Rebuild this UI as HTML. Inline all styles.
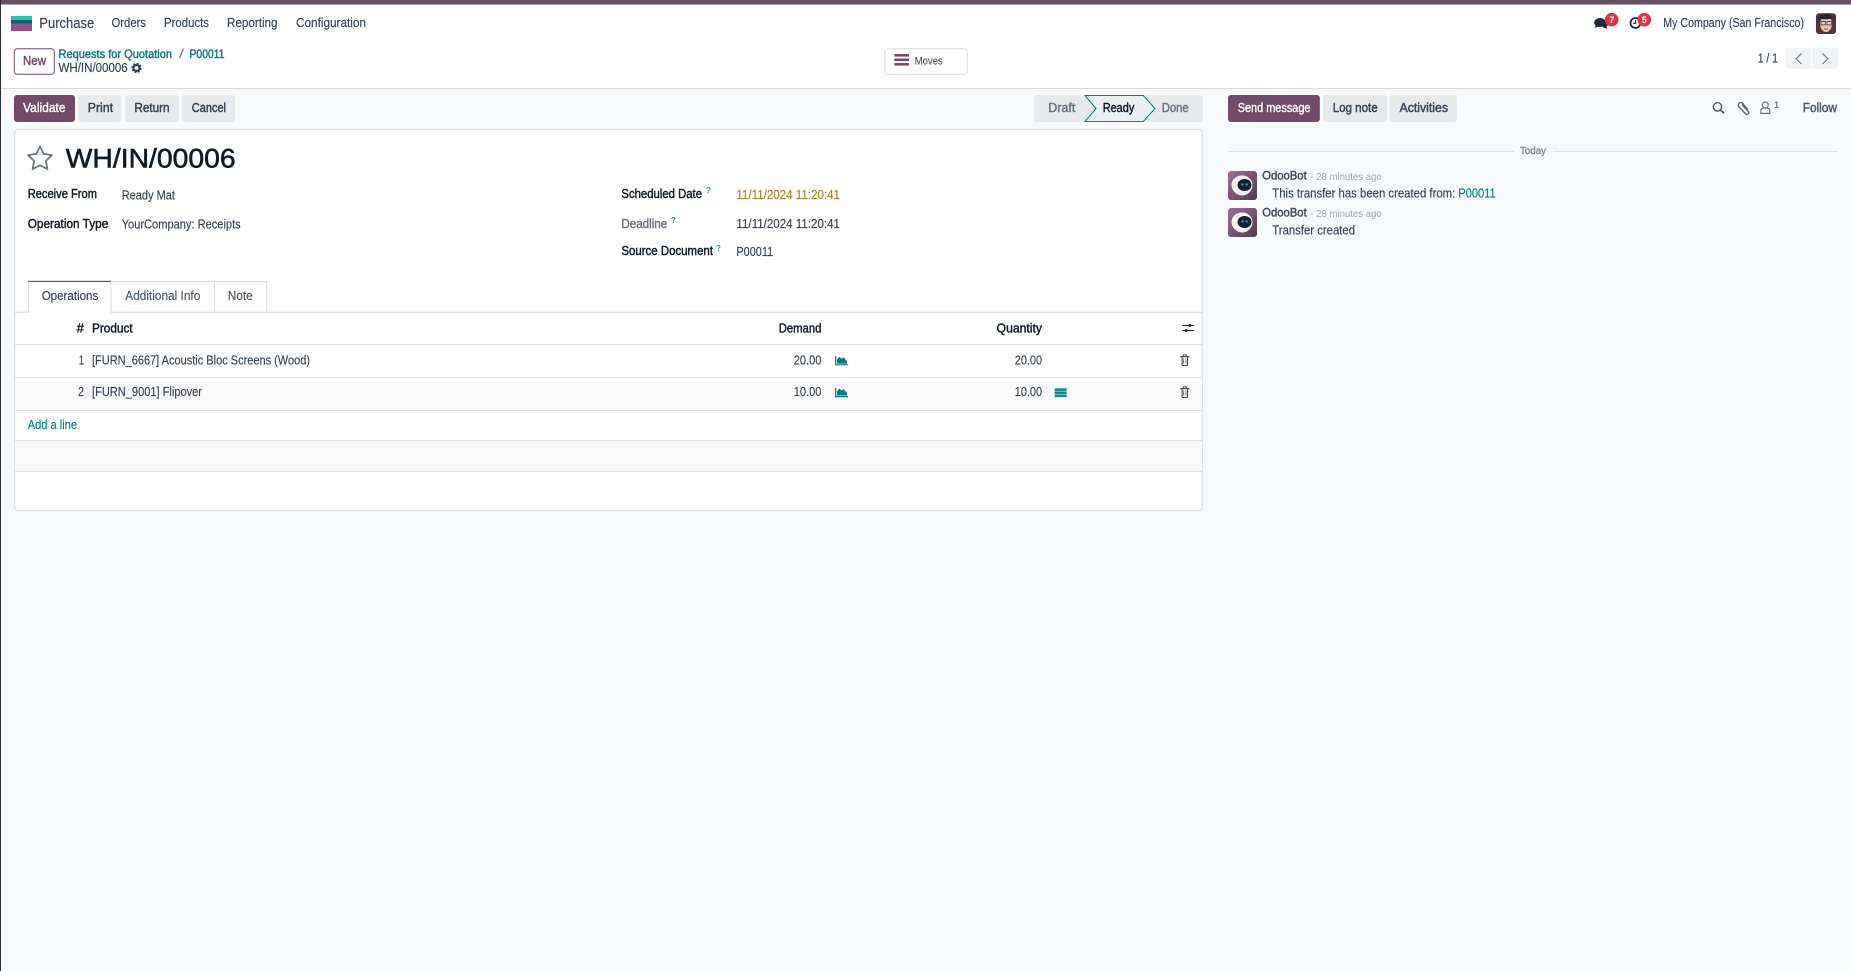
<!DOCTYPE html>
<html lang="en"><head><meta charset="utf-8"><title>WH/IN/00006</title>
<style>
html,body{margin:0;padding:0;background:#f9fafb;overflow:hidden}
svg{display:block}
text{font-family:"Liberation Sans",sans-serif;font-size:12.5px;fill:#374151}
.d{color:#374151;fill:#374151;stroke:#374151;stroke-width:.14}
.k{color:#111827;fill:#111827}
.l{color:#017e84;fill:#017e84;stroke:#017e84;stroke-width:.14}
.w{color:#fff;fill:#fff}
.p{color:#714b67;fill:#714b67}
.g{color:#6b7280;fill:#6b7280}
.q{font-size:8px;fill:#2a9aa8;font-weight:700}
.m{stroke-width:.42;stroke:currentColor}
</style></head><body>
<svg xmlns="http://www.w3.org/2000/svg" width="1851" height="971" viewBox="0 0 1851 971">
<defs>
<linearGradient id="bot" x1="0" y1="0" x2="1" y2="1"><stop offset="0" stop-color="#a06f98"/><stop offset="1" stop-color="#4f3a4c"/></linearGradient>
<g id="ob">
<rect width="29" height="29" rx="3" fill="url(#bot)"/>
<path d="M14 4.500c6 0 10.500 4 10.500 9.500S20 24.500 14 24.500c-2 0-3.500-.5-5-1.500C6 21 3.500 18 3.500 14 3.500 8.500 8 4.500 14 4.500z" fill="#f4f4f4"/>
<ellipse cx="16.500" cy="14" rx="7" ry="6" fill="#17202b"/>
<circle cx="14.500" cy="13.500" r="1.200" fill="#17a2a6"/><circle cx="18.700" cy="13.500" r="1.200" fill="#17a2a6"/>
</g>
<g id="chart" fill="#017e84"><path d="M0 0h1.200v8h11.800v1.200H0z"/><path d="M2 7.500V3.300L4.500.5 6.500 2.500 8.500 1l3.500 4v2.500z"/></g>
<g id="trash" fill="none" stroke="#374151"><path d="M1.800 3v7.600q0 .9.900.9h3.600q.9 0 .9-.9V3" stroke-width="1"/><path d="M0 2.600h9" stroke-width="1.100"/><path d="M3 2.300V.8h3v1.500" stroke-width=".9"/><path d="M3.400 4.500v5M5.600 4.500v5" stroke-width=".7"/></g>
</defs>

<rect width="1851" height="971" fill="#f9fafb"/>
<rect width="1851" height="88" fill="#fff"/>
<rect y="88" width="1851" height="1" fill="#d8dadd"/>
<rect width="1851" height="4.500" fill="#64505f"/>
<rect width="1" height="971" fill="#2b2f3a"/>

<!-- logo -->
<rect x="11" y="16" width="21" height="4.200" fill="#1fc7b3"/>
<rect x="11" y="20" width="21" height="3.700" fill="#0b5f6e"/>
<rect x="11" y="23.500" width="21" height="7.500" fill="#9a5088"/>
<text x="39.300" y="28" textLength="55" lengthAdjust="spacingAndGlyphs" style="font-size:14.500px" class="d">Purchase</text>
<text x="111.500" y="27" textLength="34.500" lengthAdjust="spacingAndGlyphs" class="d">Orders</text>
<text x="164" y="27" textLength="45" lengthAdjust="spacingAndGlyphs" class="d">Products</text>
<text x="227" y="27" textLength="50.500" lengthAdjust="spacingAndGlyphs" class="d">Reporting</text>
<text x="296" y="27" textLength="70" lengthAdjust="spacingAndGlyphs" class="d">Configuration</text>

<!-- systray -->
<g fill="#1f2937">
<ellipse cx="1600" cy="22.500" rx="5.800" ry="4.500"/>
<path d="M1596 25l-1.500 3 4-1.500z"/>
<path d="M1603 27.500c2.500 0 4.500-1 5-3l-1.500-1.500-4 3z"/>
<path d="M1606 26l1.500 3-4-1.500z"/>
</g>
<circle cx="1611.700" cy="19.700" r="6.800" fill="#dc3545"/>
<text x="1611.700" y="22.800" text-anchor="middle" class="w" style="font-size:9px;font-weight:700">7</text>
<circle cx="1635.500" cy="23" r="5" fill="none" stroke="#1f2937" stroke-width="1.800"/>
<path d="M1635.500 20v3.300h-2.500" fill="none" stroke="#1f2937" stroke-width="1.100"/>
<circle cx="1644.300" cy="19.700" r="6.800" fill="#dc3545"/>
<text x="1644.300" y="22.800" text-anchor="middle" class="w" style="font-size:9px;font-weight:700">5</text>
<text x="1663.300" y="27" textLength="140.700" lengthAdjust="spacingAndGlyphs" class="d">My Company (San Francisco)</text>

<!-- avatar -->
<rect x="1816" y="13.300" width="20" height="20.700" rx="3" fill="#55303f"/>
<path d="M1820 24c0-5 2-7 6-7s6 2 6 7c0 4-2.500 8-6 8s-6-4-6-8z" fill="#eec3a8"/>
<path d="M1819 22c-1-5 2-7 4-7.500 3-1 7-.5 9 1.500 1 1 1 3 .5 5l-1.500-2.500c-2 1-7 1-9.500.5z" fill="#2b2430"/>
<rect x="1821" y="21.500" width="4.300" height="3.400" fill="#d8d8d8" stroke="#333" stroke-width=".8"/>
<rect x="1827" y="21.500" width="4.300" height="3.400" fill="#d8d8d8" stroke="#333" stroke-width=".8"/>
<path d="M1824 29h4" stroke="#9a4a4a" stroke-width="1"/>

<!-- control panel -->
<rect x="14.300" y="48.800" width="40" height="25.500" rx="3" fill="#fff" stroke="#714b67"/>
<text x="23" y="65" textLength="23" lengthAdjust="spacingAndGlyphs" class="p m">New</text>
<text x="58.500" y="58" textLength="113.500" lengthAdjust="spacingAndGlyphs" class="l m" style="font-size:12px">Requests for Quotation</text>
<text x="179" y="58" textLength="5" lengthAdjust="spacingAndGlyphs" class="g">/</text>
<text x="189.500" y="58" textLength="35" lengthAdjust="spacingAndGlyphs" class="l m" style="font-size:12px">P00011</text>
<text x="58.500" y="72" textLength="69.200" lengthAdjust="spacingAndGlyphs" class="d">WH/IN/00006</text>
<circle cx="136.500" cy="68" r="3" fill="none" stroke="#374151" stroke-width="2.200"/>
<circle cx="136.500" cy="68" r="4.400" fill="none" stroke="#374151" stroke-width="1.500" stroke-dasharray="2 1.450"/>

<rect x="884.800" y="48.800" width="82.400" height="25.500" rx="3" fill="#fff" stroke="#d8dadd"/>
<rect x="894.300" y="54" width="14.700" height="2.600" fill="#714b67"/>
<rect x="894.300" y="58.500" width="14.700" height="2.600" fill="#714b67"/>
<rect x="894.300" y="63" width="14.700" height="2.600" fill="#714b67"/>
<text x="914.700" y="64.300" textLength="28" lengthAdjust="spacingAndGlyphs" class="d" style="font-size:11px;fill:#4b5563;stroke:#4b5563">Moves</text>

<text x="1757.700" y="62.300" textLength="20.300" lengthAdjust="spacingAndGlyphs" class="d">1 / 1</text>
<path d="M1785.300 50.700a3 3 0 0 1 3-3h22.700v21h-22.700a3 3 0 0 1-3-3z" fill="#f3f4f6"/>
<path d="M1812 47.700h23a3 3 0 0 1 3 3v15a3 3 0 0 1-3 3h-23z" fill="#f3f4f6"/>
<path d="M1801.500 53.300l-5.300 5.300 5.300 5.400" fill="none" stroke="#6b7280" stroke-width="1.100"/>
<path d="M1822.500 53.300l5.300 5.300-5.300 5.400" fill="none" stroke="#6b7280" stroke-width="1.100"/>

<!-- action buttons -->
<rect x="14" y="95" width="61" height="27" rx="3" fill="#714b67"/>
<text x="23" y="112" textLength="42.600" lengthAdjust="spacingAndGlyphs" class="w m">Validate</text>
<rect x="78" y="95" width="43.400" height="27" rx="3" fill="#e7e9ed"/>
<text x="87.800" y="112" textLength="25.200" lengthAdjust="spacingAndGlyphs" class="d m">Print</text>
<rect x="125" y="95" width="54" height="27" rx="3" fill="#e7e9ed"/>
<text x="134.400" y="112" textLength="35.200" lengthAdjust="spacingAndGlyphs" class="d m">Return</text>
<rect x="182" y="95" width="53" height="27" rx="3" fill="#e7e9ed"/>
<text x="191.800" y="112" textLength="34.200" lengthAdjust="spacingAndGlyphs" class="d m">Cancel</text>

<!-- statusbar -->
<rect x="1034" y="95" width="168.700" height="27" rx="3" fill="#e7e9ed"/>
<path d="M1085 95.500h58.300l11.700 13-11.700 13H1085l11-13z" fill="#e6f2f3" stroke="#017e84"/>
<text x="1048.300" y="112" textLength="27" lengthAdjust="spacingAndGlyphs" class="g m">Draft</text>
<text x="1102.700" y="112" textLength="31.600" lengthAdjust="spacingAndGlyphs" class="k m">Ready</text>
<text x="1161.700" y="112" textLength="27" lengthAdjust="spacingAndGlyphs" class="g m">Done</text>

<!-- sheet -->
<rect x="14.700" y="129.500" width="1187.500" height="381" rx="3" fill="#fff" stroke="#d8dadd"/>
<path d="M40 146.500l3.700 7.400 8.200 1.200-6 5.800 1.500 8.200-7.400-3.900-7.400 3.900 1.500-8.200-6-5.800 8.200-1.200z" fill="none" stroke="#6b7280" stroke-width="1.700" stroke-linejoin="round"/>
<text x="65.700" y="167.700" textLength="170" lengthAdjust="spacingAndGlyphs" class="k" style="font-size:27px;stroke:#111827;stroke-width:.55">WH/IN/00006</text>

<text x="27.700" y="198" textLength="69.300" lengthAdjust="spacingAndGlyphs" class="k m">Receive From</text>
<text x="121.700" y="199.400" textLength="53.300" lengthAdjust="spacingAndGlyphs" class="d">Ready Mat</text>
<text x="27.700" y="228" textLength="80.600" lengthAdjust="spacingAndGlyphs" class="k m">Operation Type</text>
<text x="121.700" y="228.700" textLength="119" lengthAdjust="spacingAndGlyphs" class="d">YourCompany: Receipts</text>

<text x="621.400" y="198" textLength="80.600" lengthAdjust="spacingAndGlyphs" class="k m">Scheduled Date</text>
<text x="706" y="193" class="q">?</text>
<text x="736.400" y="199" textLength="103.600" lengthAdjust="spacingAndGlyphs" style="fill:#b07d1a;stroke:#b07d1a;stroke-width:.14">11/11/2024 11:20:41</text>
<text x="621.400" y="228" textLength="45.800" lengthAdjust="spacingAndGlyphs" class="g m">Deadline</text>
<text x="671" y="223" class="q">?</text>
<text x="736.400" y="228" textLength="103.600" lengthAdjust="spacingAndGlyphs" class="d">11/11/2024 11:20:41</text>
<text x="621.400" y="255" textLength="91.600" lengthAdjust="spacingAndGlyphs" class="k m">Source Document</text>
<text x="716" y="251" class="q">?</text>
<text x="736.400" y="256" textLength="36.800" lengthAdjust="spacingAndGlyphs" class="d">P00011</text>

<!-- tabs -->
<rect x="15" y="311.700" width="1187" height="1" fill="#d8dadd"/>
<path d="M28.500 313V281.500H111V313" fill="#fff" stroke="#d8dadd"/>
<rect x="29" y="311.700" width="81.500" height="1.300" fill="#fff"/>
<rect x="28.300" y="280.800" width="83" height="1.200" fill="#714b67"/>
<path d="M111 281.500H214.300V312M214.300 281.500H266.700V312" fill="none" stroke="#d8dadd"/>
<text x="41.700" y="300" textLength="56.600" lengthAdjust="spacingAndGlyphs" class="d">Operations</text>
<text x="125.300" y="300" textLength="75" lengthAdjust="spacingAndGlyphs" style="fill:#4b5563;stroke:#4b5563;stroke-width:.14">Additional Info</text>
<text x="227.700" y="300" textLength="25" lengthAdjust="spacingAndGlyphs" style="fill:#4b5563;stroke:#4b5563;stroke-width:.14">Note</text>

<!-- table -->
<rect x="15" y="377" width="1187" height="33" fill="#fafafa"/>
<rect x="15" y="440" width="1187" height="31" fill="#fafafa"/>
<g fill="#dee2e6">
<rect x="15" y="344" width="1187" height="1"/>
<rect x="15" y="377" width="1187" height="1"/>
<rect x="15" y="410" width="1187" height="1"/>
<rect x="15" y="440" width="1187" height="1"/>
<rect x="15" y="471" width="1187" height="1"/>
</g>
<text x="76.700" y="332.400" textLength="7.300" lengthAdjust="spacingAndGlyphs" class="k m">#</text>
<text x="92" y="332.400" textLength="40.700" lengthAdjust="spacingAndGlyphs" class="k m">Product</text>
<text x="778.700" y="332.400" textLength="42.700" lengthAdjust="spacingAndGlyphs" class="k m">Demand</text>
<text x="996.600" y="332.400" textLength="45.400" lengthAdjust="spacingAndGlyphs" class="k m">Quantity</text>
<g stroke="#1f2937" fill="#1f2937">
<path d="M1182.400 325.500h11.600M1182.400 330.500h11.600" stroke-width="1" fill="none"/>
<circle cx="1190" cy="325.500" r="1.500" stroke="none"/><circle cx="1186" cy="330.500" r="1.500" stroke="none"/>
</g>

<text x="78.700" y="364.300" textLength="5.300" lengthAdjust="spacingAndGlyphs" class="d">1</text>
<text x="92" y="364.300" textLength="218" lengthAdjust="spacingAndGlyphs" class="d">[FURN_6667] Acoustic Bloc Screens (Wood)</text>
<text x="793.700" y="364.300" textLength="27.700" lengthAdjust="spacingAndGlyphs" class="d">20.00</text>
<use href="#chart" x="835" y="356.200"/>
<text x="1014.800" y="364.300" textLength="27.200" lengthAdjust="spacingAndGlyphs" class="d">20.00</text>
<use href="#trash" x="1180.300" y="354"/>

<text x="78" y="396" textLength="6" lengthAdjust="spacingAndGlyphs" class="d">2</text>
<text x="92" y="396" textLength="110" lengthAdjust="spacingAndGlyphs" class="d">[FURN_9001] Flipover</text>
<text x="793.700" y="396.200" textLength="27.700" lengthAdjust="spacingAndGlyphs" class="d">10.00</text>
<use href="#chart" x="835" y="388"/>
<text x="1014.800" y="396.200" textLength="27.200" lengthAdjust="spacingAndGlyphs" class="d">10.00</text>
<g fill="#1a8a8f"><rect x="1054.700" y="388.300" width="12" height="2.700"/><rect x="1054.700" y="391.400" width="12" height="2.700"/><rect x="1054.700" y="394.500" width="12" height="2.700"/></g>
<use href="#trash" x="1180.300" y="386"/>

<text x="27.700" y="429.200" textLength="49.300" lengthAdjust="spacingAndGlyphs" class="l">Add a line</text>

<!-- chatter buttons -->
<rect x="1228" y="95" width="91.800" height="27" rx="3" fill="#714b67"/>
<text x="1237.700" y="112" textLength="72.800" lengthAdjust="spacingAndGlyphs" class="w m">Send message</text>
<rect x="1323" y="95" width="64" height="27" rx="3" fill="#e7e9ed"/>
<text x="1332.700" y="112" textLength="45" lengthAdjust="spacingAndGlyphs" class="d m">Log note</text>
<rect x="1389.800" y="95" width="67.200" height="27" rx="3" fill="#e7e9ed"/>
<text x="1399.500" y="112" textLength="48.500" lengthAdjust="spacingAndGlyphs" class="d m">Activities</text>

<!-- chatter topbar icons -->
<circle cx="1717.500" cy="106.800" r="4.200" fill="none" stroke="#4b5563" stroke-width="1.400"/>
<path d="M1720.500 110l3.500 3.300" stroke="#4b5563" stroke-width="1.700"/>
<path d="M1748 109.500l-5.500-6.200a2.500 2.500 0 0 0-3.800 3.200l7 7.500a1.800 1.800 0 0 0 2.700-2.300l-6.500-7" fill="none" stroke="#5b6472" stroke-width="1.400"/>
<circle cx="1765.300" cy="105" r="3" fill="none" stroke="#6b7280" stroke-width="1.200"/>
<path d="M1760.900 113.400v-2.400q0-2.500 2.500-3h3.800q2.500.5 2.500 3v2.400z" fill="none" stroke="#6b7280" stroke-width="1.200"/>
<text x="1774" y="108" style="font-size:9px;fill:#6b7280;font-weight:700">1</text>
<text x="1802.700" y="112" textLength="34.300" lengthAdjust="spacingAndGlyphs" class="m" style="fill:#4b5563;color:#4b5563">Follow</text>

<!-- chatter messages -->
<rect x="1228" y="151" width="286" height="1" fill="#dfe1e5"/>
<rect x="1553" y="151" width="285" height="1" fill="#dfe1e5"/>
<text x="1520" y="154" textLength="26" lengthAdjust="spacingAndGlyphs" class="g m" style="font-size:10.500px;fill:#868e96;color:#868e96">Today</text>

<use href="#ob" x="1228" y="171"/>
<text x="1262.300" y="179.500" textLength="44.400" lengthAdjust="spacingAndGlyphs" class="m" style="font-size:12px;fill:#3f4654;color:#3f4654">OdooBot</text>
<text x="1310.300" y="180" textLength="71.400" lengthAdjust="spacingAndGlyphs" style="font-size:10.500px;fill:#9ca3af">- 28 minutes ago</text>
<text x="1272.300" y="197.400" textLength="183" lengthAdjust="spacingAndGlyphs" class="d">This transfer has been created from:</text>
<text x="1458.300" y="197.400" textLength="37.400" lengthAdjust="spacingAndGlyphs" class="l">P00011</text>

<use href="#ob" x="1228" y="208"/>
<text x="1262.300" y="216.700" textLength="44.400" lengthAdjust="spacingAndGlyphs" class="m" style="font-size:12px;fill:#3f4654;color:#3f4654">OdooBot</text>
<text x="1310.300" y="217" textLength="71.400" lengthAdjust="spacingAndGlyphs" style="font-size:10.500px;fill:#9ca3af">- 28 minutes ago</text>
<text x="1272.300" y="234.400" textLength="82.700" lengthAdjust="spacingAndGlyphs" class="d">Transfer created</text>
</svg>
</body></html>
